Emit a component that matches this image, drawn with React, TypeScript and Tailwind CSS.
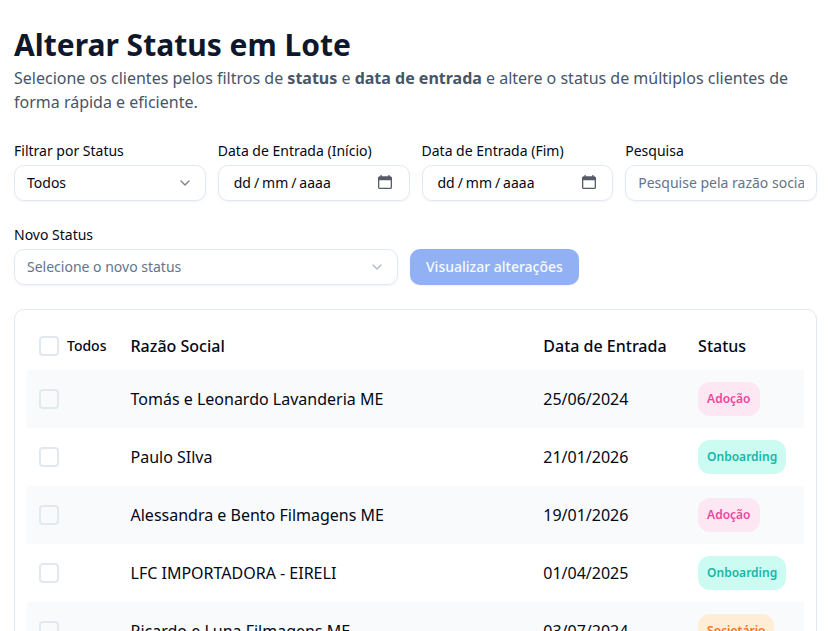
import { ChevronDown } from 'lucide-react';

const CLIENTES = [
  { id: 1, razaoSocial: 'Tomás e Leonardo Lavanderia ME', dataEntrada: '25/06/2024', status: 'Adoção' },
  { id: 2, razaoSocial: 'Paulo SIlva', dataEntrada: '21/01/2026', status: 'Onboarding' },
  { id: 3, razaoSocial: 'Alessandra e Bento Filmagens ME', dataEntrada: '19/01/2026', status: 'Adoção' },
  { id: 4, razaoSocial: 'LFC IMPORTADORA - EIRELI', dataEntrada: '01/04/2025', status: 'Onboarding' },
  { id: 5, razaoSocial: 'Ricardo e Luna Filmagens ME', dataEntrada: '03/07/2024', status: 'Societário' },
];

const STATUS_STYLES: Record<string, string> = {
  Adoção: 'bg-[#fce7f3] text-[#ec4899]',
  Onboarding: 'bg-[#ccfbf1] text-[#14b8a6]',
  Societário: 'bg-[#ffedd5] text-[#f97316]',
};

function CalendarIcon() {
  return (
    <svg viewBox="0 0 14 14" className="mb-0.5 h-3.5 w-3.5 text-[#565b66]" fill="none" stroke="currentColor">
      <rect x="0.65" y="2.15" width="12.7" height="11.2" rx="1.2" strokeWidth="1.3" />
      <path d="M1.8 1.5h10.4c.9 0 1.6.7 1.6 1.6v2.2H.2V3.1c0-.9.7-1.6 1.6-1.6z" fill="currentColor" stroke="none" />
      <path d="M3.1 0v2M10.9 0v2" strokeWidth="1.3" />
    </svg>
  );
}

function DateField({ label }: { label: string }) {
  return (
    <div className="flex flex-col gap-1">
      <span className="text-sm">{label}</span>
      <button
        type="button"
        className="flex h-9 items-center justify-between rounded-[10px] border border-[#e2e8f0] pr-[16.5px] pl-[15px] text-sm shadow-xs"
      >
        <span className="whitespace-pre [word-spacing:-0.7px]">dd / mm / aaaa</span>
        <CalendarIcon />
      </button>
    </div>
  );
}

function Checkbox() {
  return <span className="block h-5 w-5 shrink-0 rounded-[4px] border-2 border-[#e2e8f0]" />;
}

export default function App() {
  return (
    <main className="h-[631px] overflow-hidden bg-white pt-[27px] pr-3 pl-[14px] font-['Noto_Sans',sans-serif] text-[#020817]">
      <h1 className="text-3xl leading-9 font-bold text-[#0f172a]">Alterar Status em Lote</h1>
      <p className="mt-[3px] text-base text-[#475569]">
        Selecione os clientes pelos filtros de <strong>status</strong> e <strong>data de entrada</strong> e altere o
        status de múltiplos clientes de forma rápida e eficiente.
      </p>

      <section className="mt-[27px] grid grid-cols-4 gap-3">
        <div className="flex flex-col gap-1">
          <span className="text-sm">Filtrar por Status</span>
          <button
            type="button"
            className="flex h-9 items-center justify-between rounded-[10px] border border-[#e2e8f0] px-3 text-sm shadow-xs"
          >
            Todos
            <ChevronDown className="h-4 w-4 opacity-50" />
          </button>
        </div>
        <DateField label="Data de Entrada (Início)" />
        <DateField label="Data de Entrada (Fim)" />
        <div className="flex flex-col gap-1">
          <span className="text-sm">Pesquisa</span>
          <input
            placeholder="Pesquise pela razão social"
            className="h-9 w-full rounded-[10px] border border-[#e2e8f0] px-3 pb-0.5 text-sm shadow-xs placeholder:text-[#64748b]"
          />
        </div>
      </section>

      <section className="mt-6 flex items-end gap-3">
        <div className="flex w-96 flex-col gap-1">
          <span className="text-sm">Novo Status</span>
          <button
            type="button"
            className="flex h-9 items-center justify-between rounded-[10px] border border-[#e2e8f0] px-3 text-sm text-[#64748b] shadow-xs"
          >
            Selecione o novo status
            <ChevronDown className="h-4 w-4 opacity-50" />
          </button>
        </div>
        <button
          type="button"
          className="h-9 rounded-[10px] bg-[#92b1f5] px-4 text-sm font-medium text-[#f8fafc] shadow-xs"
        >
          Visualizar alterações
        </button>
      </section>

      <section className="mt-6 rounded-[10px] border border-[#e2e8f0] p-3">
        <div className="grid h-12 grid-cols-[91.5px_412.8px_154.8px_1fr] items-center pl-3 font-medium">
          <div className="flex items-center gap-2 text-sm">
            <Checkbox />
            Todos
          </div>
          <span>Razão Social</span>
          <span>Data de Entrada</span>
          <span>Status</span>
        </div>
        {CLIENTES.map((cliente) => (
          <div
            key={cliente.id}
            className="grid h-[58px] grid-cols-[91.5px_412.8px_154.8px_1fr] items-center pl-3 odd:bg-white even:bg-[#f8fafc]"
          >
            <Checkbox />
            <span>{cliente.razaoSocial}</span>
            <span>{cliente.dataEntrada}</span>
            <span
              className={`flex h-[34px] items-center justify-self-start rounded-xl px-[9px] text-xs font-semibold ${STATUS_STYLES[cliente.status]}`}
            >
              {cliente.status}
            </span>
          </div>
        ))}
      </section>
    </main>
  );
}
